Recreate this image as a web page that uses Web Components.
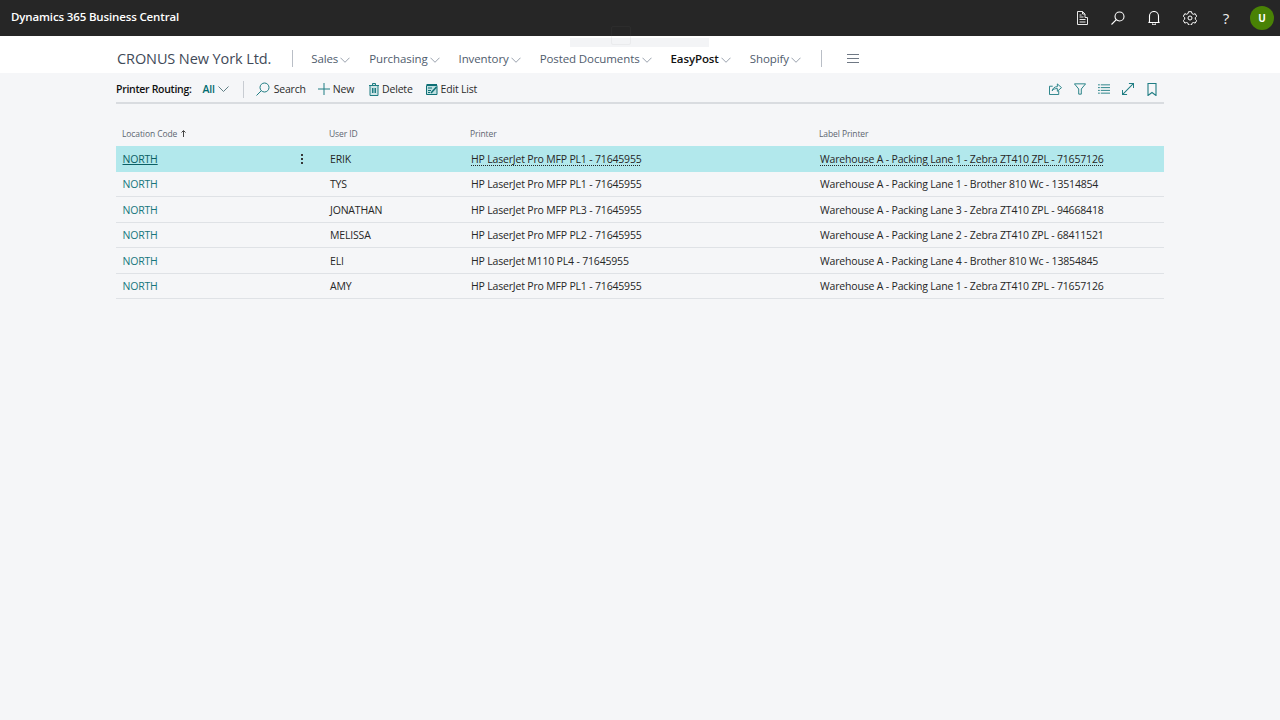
<!DOCTYPE html>
<html>
<head>
<meta charset="utf-8">
<title>Printer Routing</title>
<style>
    html, body { margin: 0; height: 100%; }
    body {
        background: #f5f6f8;
        font-family: "Open Sans", "Noto Sans", sans-serif;
        color: #212121;
        overflow: hidden;
    }
</style>
</head>
<body>
<bc-appbar title="Dynamics 365 Business Central"></bc-appbar>
<bc-navbar company="CRONUS New York Ltd."></bc-navbar>
<bc-actionbar caption="Printer Routing:"></bc-actionbar>
<bc-grid></bc-grid>
<bc-ghost></bc-ghost>

<script>
(function () {

    const chevron = `<svg width="11" height="6" viewBox="0 0 11 6" fill="none" stroke="currentColor" stroke-width="1"><path d="M.5.5l5 5 5-5"/></svg>`;

    class AppBar extends HTMLElement {
        constructor() {
            super();
            this.attachShadow({ mode: 'open' });
            const title = this.getAttribute('title') || '';
            this.shadowRoot.innerHTML = `
                <style>
                    :host { display: flex; align-items: center; height: 36px; background: #262626; color: #fff; padding: 0 6px 0 11px; }
                    .name { font-size: 11.5px; font-weight: 600; flex: 1; letter-spacing: -.14px; padding-bottom: 3px; }
                    .icons { display: flex; align-items: center; }
                    .ico { width: 36px; height: 36px; display: flex; align-items: center; justify-content: center; }
                    svg { display: block; }
                    .avatar { width: 24px; height: 24px; border-radius: 50%; background: #498205; font-size: 10px; font-weight: 700; display: flex; align-items: center; justify-content: center; margin-left: 6px; }
                    .help { font-size: 15px; color: #eee; }
                </style>
                <span class="name">${title}</span>
                <div class="icons">
                    <span class="ico"><svg width="12" height="14" viewBox="0 0 12 14" fill="none" stroke="#e8e8e8"><path d="M1.5.5h5l2.500 2.500v3.500h2.500v7h-10z"/><path d="M6.500.5v2.500h2.500M3.500 4h2M3.500 6h4M3.500 8.500h6M3.500 11h6"/></svg></span>
                    <span class="ico"><svg width="14" height="14" viewBox="0 0 14 14" fill="none" stroke="#fff" stroke-width="1.100"><circle cx="8.500" cy="5.500" r="4.500"/><path d="M5.300 8.700L.5 13.500"/></svg></span>
                    <span class="ico"><svg width="12" height="14" viewBox="0 0 12 14" fill="none" stroke="#fff" stroke-width="1.100"><path d="M1.500 11v-6a4.500 4.500 0 0 1 9 0v6l1 .5h-11z"/><path d="M4.500 12.500a1.500 1.500 0 0 0 3 0"/></svg></span>
                    <span class="ico"><svg width="14" height="14" viewBox="0 0 14 14" fill="none" stroke="#fff"><circle cx="7" cy="7" r="2"/><path d="M5.500.7h3l.4 1.800 1.500.8 1.800-.6 1.500 2.600-1.400 1.300v1.600l1.400 1.300-1.500 2.600-1.800-.6-1.500.8-.4 1.800h-3l-.4-1.800-1.500-.8-1.800.6-1.500-2.600 1.400-1.300v-1.600l-1.400-1.300 1.500-2.600 1.800.6 1.500-.8z"/></svg></span>
                    <span class="ico help">?</span>
                    <span class="avatar">U</span>
                </div>
            `;
        }
    }

    class NavBar extends HTMLElement {
        constructor() {
            super();
            this.attachShadow({ mode: 'open' });
            const items = ['Sales', 'Purchasing', 'Inventory', 'Posted Documents', 'EasyPost', 'Shopify'];
            const links = items.map(i => `<span class="item ${i === 'EasyPost' ? 'on' : ''}">${i}${chevron}</span>`).join('');
            this.shadowRoot.innerHTML = `
                <style>
                    :host { display: flex; align-items: center; box-sizing: border-box; height: 37px; background: #fff; padding: 8px 0 0 117px; color: #505c6d; }
                    .company { font-size: 14.500px; color: #3f4a58; letter-spacing: -.1px; }
                    .sep { width: 1px; height: 17px; background: #b9bec6; }
                    .first { margin: 0 18px 0 21px; }
                    .items { display: flex; gap: 19px; }
                    .item { font-size: 11.500px; display: flex; align-items: center; gap: 2px; letter-spacing: -.1px; }
                    .item svg { width: 10px; color: #8f98a5; margin-top: 2px; }
                    .on { color: #111; font-weight: 600; }
                    .last { margin: 0 25px 0 20px; }
                    .menu { width: 12px; height: 7px; border-top: 1px solid #6f7884; border-bottom: 1px solid #6f7884; position: relative; }
                    .menu::after { content: ''; position: absolute; left: 0; right: 0; top: 3px; border-top: 1px solid #6f7884; }
                </style>
                <span class="company">${this.getAttribute('company') || ''}</span>
                <span class="sep first"></span>
                <div class="items">${links}</div>
                <span class="sep last"></span>
                <span class="menu"></span>
            `;
        }
    }

    class ActionBar extends HTMLElement {
        constructor() {
            super();
            this.attachShadow({ mode: 'open' });
            this.shadowRoot.innerHTML = `
                <style>
                    :host { display: flex; align-items: center; box-sizing: border-box; height: 31px; padding-top: 3px; margin: 0 116px; border-bottom: 2px solid #d9dce0; font-size: 10.500px; letter-spacing: -.2px; color: #2b2b2b; }
                    b { font-weight: 600; color: #111; margin-right: 11px; letter-spacing: -.3px; }
                    .all { color: #006b70; font-weight: 600; display: flex; align-items: center; gap: 3px; }
                    .all svg { color: #5f7f85; }
                    .sep { width: 1px; height: 17px; background: #c8ccd2; margin: 0 12px 0 14px; }
                    .act { display: flex; align-items: center; gap: 4px; margin-right: 13px; }
                    .right { margin-left: auto; display: flex; align-items: center; gap: 12px; margin-right: 7px; }
                    .right svg:last-child { margin-left: 1px; }
                    svg { display: block; }
                </style>
                <b>${this.getAttribute('caption') || ''}</b>
                <span class="all">All ${chevron}</span>
                <span class="sep"></span>
                <span class="act" style="margin-right:12px"><svg width="14" height="14" viewBox="0 0 14 14" fill="none" stroke="#1f7d83"><circle cx="8.500" cy="5.500" r="4.500"/><path d="M5.300 8.700L.5 13.500"/></svg>Search</span>
                <span class="act" style="gap:3px;margin-right:15px"><svg width="12" height="12" viewBox="0 0 12 12" fill="none" stroke="#1f7d83"><path d="M6 0v12M0 6h12"/></svg>New</span>
                <span class="act" style="gap:3px"><svg width="10" height="13" viewBox="0 0 10 13" fill="#cfe5e6" stroke="#1f7d83"><path d="M1 2.500h8v10h-8zM0 2.500h10M3.500 2v-1.500h3v1.500M3.500 5v5M5 5v5M6.500 5v5"/></svg>Delete</span>
                <span class="act" style="gap:3px"><svg width="12" height="12" viewBox="0 0 12 12" fill="none" stroke="#0e6f75"><path d="M.5 2.500h10.500v9h-10.500z" fill="#bfe0e1"/><path d="M.5 1.500h10.500M2 5h4M2 7.500h3M2 9.500h2" stroke-width="1.200"/><path d="M5 10l5.500-6" stroke-width="1.600"/></svg>Edit List</span>
                <div class="right">
                    <svg width="13" height="12" viewBox="0 0 14 13" fill="none" stroke="#1f7d83"><path d="M4 3.500h-3.500v9h10v-4"/><path d="M3.500 8.500c.5-3 2.500-4.500 5.500-4.500v-3l4.500 4-4.500 4v-3c-2.500 0-4 .7-5.500 2z"/></svg>
                    <svg width="12" height="12" viewBox="0 0 14 13" fill="none" stroke="#1f7d83" stroke-width="1.100"><path d="M.5.5h13l-5 6v6h-3v-6z"/></svg>
                    <svg width="12" height="10" viewBox="0 0 13 10" fill="none" stroke="#1f7d83"><path d="M0 .5h2M3 .5h10M0 3.500h2M3 3.500h10M0 6.500h2M3 6.500h10M0 9.500h2M3 9.500h10"/></svg>
                    <svg width="12" height="12" viewBox="0 0 13 13" fill="none" stroke="#1f7d83" stroke-width="1.100"><path d="M.5 12.500l12-12M7.500.5h5v5M.5 7.500v5h5"/></svg>
                    <svg width="10" height="13" viewBox="0 0 10 13" fill="none" stroke="#1f7d83" stroke-width="1.100"><path d="M1 .5h8v12l-4-3-4 3z"/></svg>
                </div>
            `;
        }
    }

    class GridRow extends HTMLElement {
        static get template() {
            const t = document.createElement('template');
            t.innerHTML = `
                <style>
                    :host { display: grid; grid-template-columns: 213px 141px 349px 1fr; height: 25.500px; padding-top: 1px; align-items: center; font-size: 10.500px; letter-spacing: -.18px; box-sizing: border-box; border-bottom: 1px solid #dfe2e6; color: #262626; }
                    :host([selected]) { background: #b2e8ec; border-bottom-color: #b2e8ec; }
                    .code { color: #17777d; padding-left: 6.500px; display: flex; justify-content: space-between; align-items: center; padding-right: 26px; }
                    :host([selected]) .code { color: #0b5f64; }
                    :host([selected]) .link { text-decoration: underline; }
                    :host([selected]) .dot { text-decoration: underline dotted; text-underline-offset: 2px; }
                    .dots { display: none; width: 2px; height: 12px; background: radial-gradient(circle, #333 .7px, transparent 1.1px) 0 0 / 2px 4px; }
                    :host([selected]) .dots { display: block; }
                    .c { padding-left: 1px; }
                </style>
                <div class="code"><span class="link"></span><i class="dots"></i></div>
                <div class="c user"></div>
                <div class="c"><span class="dot printer"></span></div>
                <div class="c"><span class="dot label"></span></div>
            `;
            return t;
        }
        constructor() {
            super();
            this.attachShadow({ mode: 'open' }).appendChild(GridRow.template.content.cloneNode(true));
            const r = this.shadowRoot;
            r.querySelector('.link').textContent = this.getAttribute('code');
            r.querySelector('.user').textContent = this.getAttribute('user');
            r.querySelector('.printer').textContent = this.getAttribute('printer');
            r.querySelector('.label').textContent = this.getAttribute('label');
        }
    }

    class Grid extends HTMLElement {
        constructor() {
            super();
            this.attachShadow({ mode: 'open' });
            const rows = [
                ['ERIK', 'HP LaserJet Pro MFP PL1 - 71645955', 'Warehouse A - Packing Lane 1 - Zebra ZT410 ZPL - 71657126'],
                ['TYS', 'HP LaserJet Pro MFP PL1 - 71645955', 'Warehouse A - Packing Lane 1 - Brother 810 Wc - 13514854'],
                ['JONATHAN', 'HP LaserJet Pro MFP PL3 - 71645955', 'Warehouse A - Packing Lane 3 - Zebra ZT410 ZPL - 94668418'],
                ['MELISSA', 'HP LaserJet Pro MFP PL2 - 71645955', 'Warehouse A - Packing Lane 2 - Zebra ZT410 ZPL - 68411521'],
                ['ELI', 'HP LaserJet M110 PL4 - 71645955', 'Warehouse A - Packing Lane 4 - Brother 810 Wc - 13854845'],
                ['AMY', 'HP LaserJet Pro MFP PL1 - 71645955', 'Warehouse A - Packing Lane 1 - Zebra ZT410 ZPL - 71657126']
            ];
            this.shadowRoot.innerHTML = `
                <style>
                    :host { display: block; margin: 17px 116px 0; }
                    .head { display: grid; grid-template-columns: 213px 141px 349px 1fr; height: 25px; align-items: center; font-size: 8.500px; letter-spacing: -.1px; color: #5d6671; }
                    .head span:first-child { padding-left: 6px; }
                    .head svg { margin-left: 4px; }
                </style>
                <div class="head">
                    <span>Location Code<svg width="5" height="7" viewBox="0 0 5 7" fill="none" stroke="#444"><path d="M2.500 7V1M.5 2.500l2-2 2 2"/></svg></span>
                    <span>User ID</span><span>Printer</span><span>Label Printer</span>
                </div>
                ${rows.map((r, i) => `<bc-grid-row ${i === 0 ? 'selected' : ''} code="NORTH" user="${r[0]}" printer="${r[1]}" label="${r[2]}"></bc-grid-row>`).join('')}
            `;
        }
    }

    // faint notification fading out over the top of the page
    class Ghost extends HTMLElement {
        constructor() {
            super();
            this.attachShadow({ mode: 'open' });
            this.shadowRoot.innerHTML = `
                <style>
                    :host { position: absolute; left: 570px; top: 38px; width: 139px; height: 9px; background: #f3f4f6; }
                    .box { position: absolute; left: 41px; top: -12px; width: 18px; height: 17px; border: 1px solid rgba(128,128,128,.07); border-radius: 2px; }
                </style>
                <div class="box"></div>
            `;
        }
    }

    customElements.define('bc-appbar', AppBar);
    customElements.define('bc-navbar', NavBar);
    customElements.define('bc-actionbar', ActionBar);
    customElements.define('bc-grid-row', GridRow);
    customElements.define('bc-grid', Grid);
    customElements.define('bc-ghost', Ghost);

})();
</script>
</body>
</html>
